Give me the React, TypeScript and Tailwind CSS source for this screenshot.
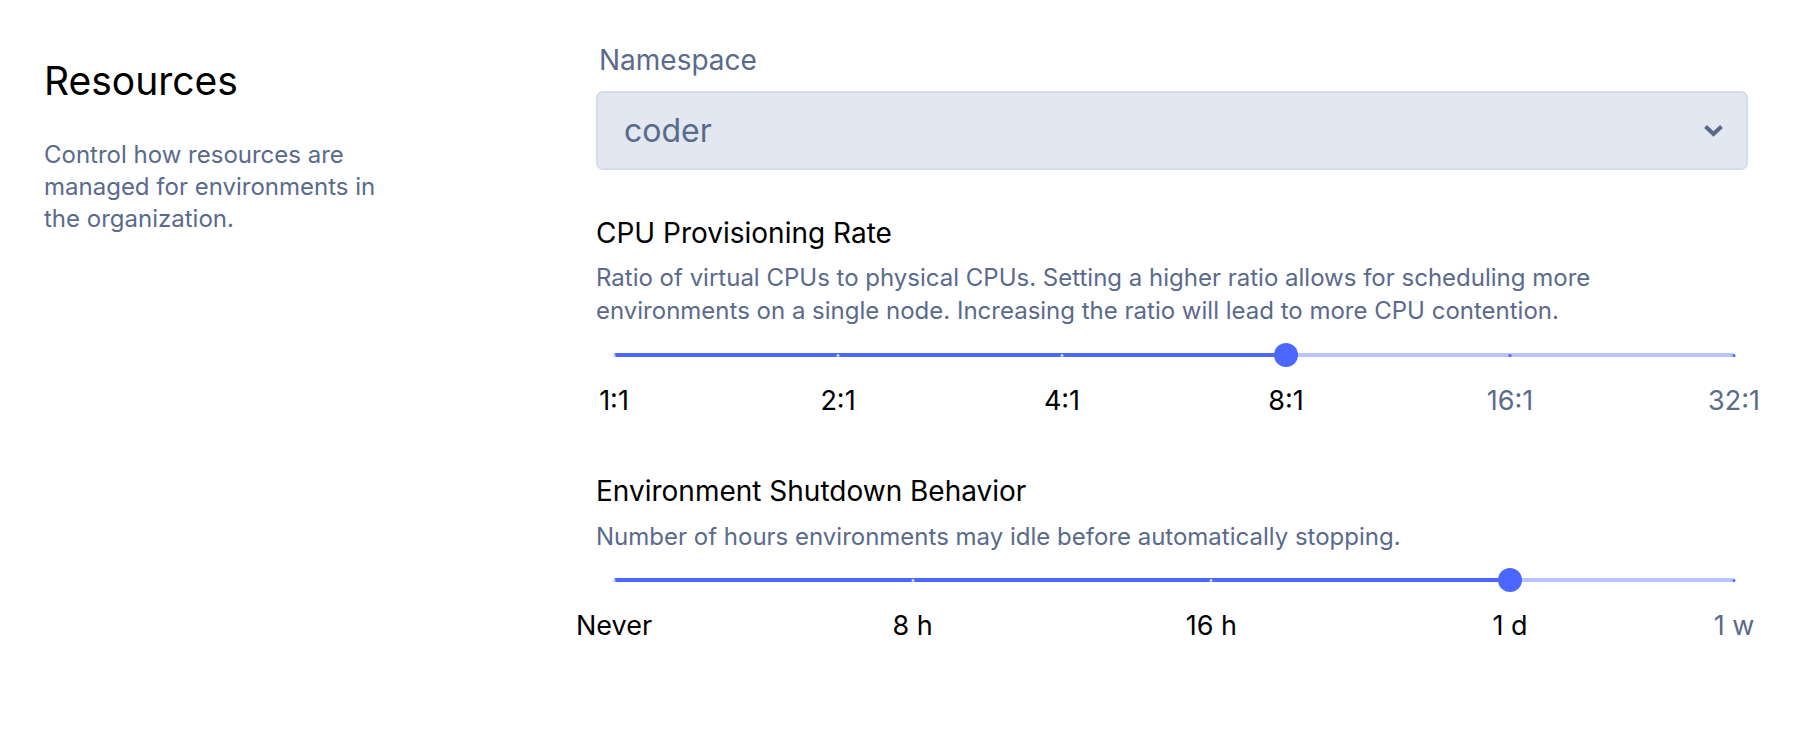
import React from 'react';

type Mark = { label: string; at: number };

const cpuMarks: Mark[] = [
  { label: '1:1', at: 0 },
  { label: '2:1', at: 0.2 },
  { label: '4:1', at: 0.4 },
  { label: '8:1', at: 0.6 },
  { label: '16:1', at: 0.8 },
  { label: '32:1', at: 1 },
];

const idleMarks: Mark[] = [
  { label: 'Never', at: 0 },
  { label: '8 h', at: 8 / 30 },
  { label: '16 h', at: 16 / 30 },
  { label: '1 d', at: 24 / 30 },
  { label: '1 w', at: 1 },
];

function Slider({ marks, value }: { marks: Mark[]; value: number }) {
  return (
    <div className="ml-[18px] mr-[14px] flex flex-col gap-[17px]">
      {/* track + thumb */}
      <div className="relative h-[24px]">
        <div className="absolute inset-x-0 top-[10px] h-[4px] rounded-full bg-[#b9c4ff]" />
        <div
          className="absolute left-0 top-[10px] h-[4px] rounded-full bg-[#4a68ff]"
          style={{ width: `${value * 100}%` }}
        />
        {marks.map((m) => (
          <span
            key={m.label}
            className={
              'absolute top-[10.5px] h-[3px] w-[3px] -translate-x-1/2 rounded-full ' +
              (m.at <= value ? 'bg-[#d6dcff]' : 'bg-[#4a68ff]')
            }
            style={{ left: `${m.at * 100}%` }}
          />
        ))}
        <span
          className="absolute top-0 h-[24px] w-[24px] -translate-x-1/2 rounded-full bg-[#4a68ff]"
          style={{ left: `${value * 100}%` }}
        />
      </div>
      {/* labels */}
      <div className="relative h-[34px]">
        {marks.map((m) => (
          <span
            key={m.label}
            className={
              'absolute top-0 -translate-x-1/2 whitespace-nowrap text-[27px] leading-[34px] ' +
              (m.at <= value ? 'text-black' : 'text-[#5a6a8c]')
            }
            style={{ left: `${m.at * 100}%` }}
          >
            {m.label}
          </span>
        ))}
      </div>
    </div>
  );
}

export default function App() {
  return (
    <div className="flex h-[742px] w-full bg-white font-['Inter','Liberation_Sans',sans-serif] antialiased">
      {/* Left column */}
      <div className="flex w-[596px] shrink-0 flex-col gap-[35px] pl-[44px] pt-[58px]">
        <h2 className="text-[39px] leading-[46px] font-normal text-black">Resources</h2>
        <p className="w-[345px] text-[24px] leading-[32px] text-[#5a6a8c]">
          Control how resources are managed for environments in the organization.
        </p>
      </div>

      {/* Right column */}
      <div className="flex flex-1 flex-col pr-[62px] pt-[42px]">
        <label className="pl-[3px] text-[28px] leading-[36px] text-[#5a6a8c]">Namespace</label>
        <div className="mt-[13px] flex h-[79px] items-center justify-between rounded-[7px] border-2 border-[#d5dce9] bg-[#e2e7f0] pl-[26px] pr-[22px]">
          <span className="text-[32px] leading-[40px] text-[#5a6a8c]">coder</span>
          <svg width="21" height="13" viewBox="0 0 21 13" fill="none">
            <path d="M2.5 2.5 L10.5 10 L18.5 2.5" stroke="#5a6a8c" strokeWidth="4" strokeLinejoin="miter" />
          </svg>
        </div>

        <h3 className="mt-[45px] text-[28px] leading-[36px] text-black">CPU Provisioning Rate</h3>
        <p className="mt-[10px] text-[24px] leading-[33px] text-[#5a6a8c]">
          Ratio of virtual CPUs to physical CPUs. Setting a higher ratio allows for scheduling more
          <br />
          environments on a single node. Increasing the ratio will lead to more CPU contention.
        </p>
        <div className="mt-[16px]">
          <Slider marks={cpuMarks} value={0.6} />
        </div>

        <h3 className="mt-[55px] text-[28px] leading-[36px] text-black">Environment Shutdown Behavior</h3>
        <p className="mt-[12px] text-[24px] leading-[32px] text-[#5a6a8c]">
          Number of hours environments may idle before automatically stopping.
        </p>
        <div className="mt-[15px]">
          <Slider marks={idleMarks} value={24 / 30} />
        </div>
      </div>
    </div>
  );
}
